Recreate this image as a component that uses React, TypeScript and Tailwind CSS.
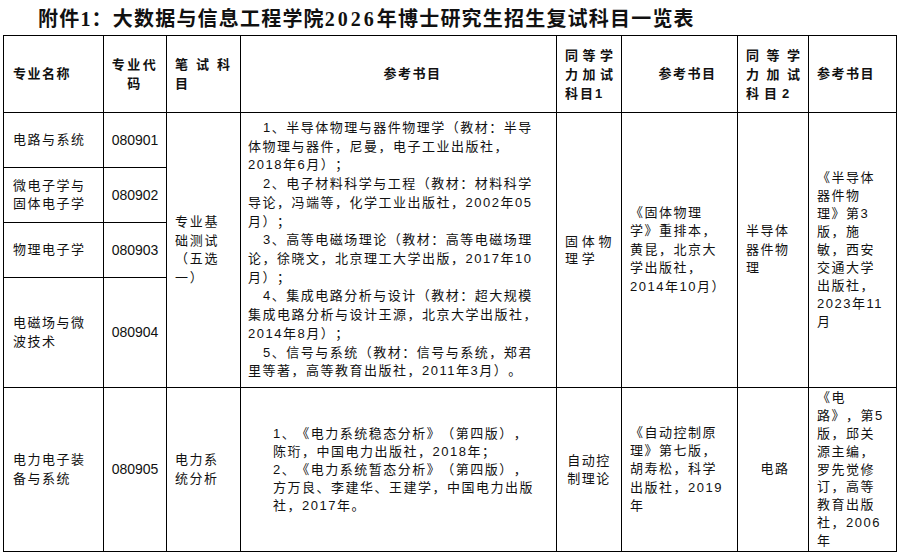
const sans = "font-['Liberation_Sans','Noto_Sans_CJK_SC',sans-serif]";

const Cell = ({ className = "", children }: { className?: string; children?: React.ReactNode }) => (
  <div className={`border-r border-b border-black flex items-center ${className}`}>{children}</div>
);

const Lines = ({ lines, className = "" }: { lines: string[]; className?: string }) => (
  <div className={className}>
    {lines.map((l, i) => (
      <div key={i} className="whitespace-nowrap">
        {l}
      </div>
    ))}
  </div>
);

const refsA: [string, boolean][] = [
  ["1、半导体物理与器件物理学（教材：半导", true],
  ["体物理与器件，尼曼，电子工业出版社，", false],
  ["2018年6月）；", false],
  ["2、电子材料科学与工程（教材：材料科学", true],
  ["导论，冯端等，化学工业出版社，2002年05", false],
  ["月）；", false],
  ["3、高等电磁场理论（教材：高等电磁场理", true],
  ["论，徐晓文，北京理工大学出版，2017年10", false],
  ["月）；", false],
  ["4、集成电路分析与设计（教材：超大规模", true],
  ["集成电路分析与设计王源，北京大学出版社，", false],
  ["2014年8月）；", false],
  ["5、信号与系统（教材：信号与系统，郑君", true],
  ["里等著，高等教育出版社，2011年3月）。", false],
];

const majors = [
  { name: ["电路与系统"], code: "080901" },
  { name: ["微电子学与", "固体电子学"], code: "080902" },
  { name: ["物理电子学"], code: "080903" },
  { name: ["电磁场与微", "波技术"], code: "080904" },
];

export default function App() {
  return (
    <div className={`w-[903px] h-[558px] bg-white text-[#111] ${sans} overflow-hidden [text-spacing-trim:space-all]`}>
      <div className="h-[35px] pt-[7px] pl-[38px] text-[20px] leading-[24px] font-bold tracking-[1.2px] whitespace-nowrap font-['Liberation_Serif','Noto_Sans_CJK_SC',serif]">
        附件1：大数据与信息工程学院<span className="tracking-[3px]">2026</span>年博士研究生招生复试科目一览表
      </div>

      <div className="ml-[3px] w-[894px] border-l border-t border-black grid grid-cols-[100px_63px_74px_316px_65px_116px_71px_88px] grid-rows-[77px_55px_55px_55px_110px_164px] text-[13px] leading-[18.5px] tracking-[1.5px]">
        {/* header */}
        <Cell className="pl-[9px] font-bold">专业名称</Cell>
        <Cell className="justify-center font-bold text-center">
          <Lines lines={["专业代", "码"]} className="tracking-[2.5px] leading-[19px]" />
        </Cell>
        <Cell className="pl-[8px] font-bold">
          <div className="leading-[19px]">
            <div className="tracking-[8px] whitespace-nowrap">笔试科</div>
            <div>目</div>
          </div>
        </Cell>
        <Cell className="justify-center pl-[28px] font-bold">参考书目</Cell>
        <Cell className="pl-[8px] font-bold">
          <div className="leading-[19px]">
            <div className="tracking-[4.5px] whitespace-nowrap">同等学</div>
            <div className="tracking-[4.5px] whitespace-nowrap">力加试</div>
            <div className="tracking-[2px] whitespace-nowrap">科目1</div>
          </div>
        </Cell>
        <Cell className="justify-center pl-[16px] font-bold">参考书目</Cell>
        <Cell className="pl-[8px] font-bold">
          <div className="leading-[19px]">
            <div className="tracking-[7.5px] whitespace-nowrap">同等学</div>
            <div className="tracking-[7.5px] whitespace-nowrap">力加试</div>
            <div className="tracking-[5px] whitespace-nowrap">科目2</div>
          </div>
        </Cell>
        <Cell className="pl-[8px] font-bold">参考书目</Cell>

        {/* first major + merged cells */}
        <Cell className="pl-[9px]">
          <Lines lines={majors[0].name} />
        </Cell>
        <Cell className="justify-center text-[14px] tracking-normal">{majors[0].code}</Cell>
        <Cell className="row-span-4 pl-[8px]">
          <Lines lines={["专业基", "础测试", "（五选", "一）"]} className="tracking-[1.8px]" />
        </Cell>
        <Cell className="row-span-4 pl-[7px]">
          <div className="leading-[18.7px]">
            {refsA.map(([t, indent], i) => (
              <div key={i} className={`whitespace-nowrap ${indent ? "pl-[15px]" : ""}`}>
                {t}
              </div>
            ))}
          </div>
        </Cell>
        <Cell className="row-span-4 pl-[8px]">
          <Lines lines={["固体物", "理学"]} className="tracking-[3.7px] leading-[17px]" />
        </Cell>
        <Cell className="row-span-4 pl-[8px]">
          <Lines lines={["《固体物理", "学》重排本，", "黄昆，北京大", "学出版社，", "2014年10月）"]} />
        </Cell>
        <Cell className="row-span-4 pl-[8px]">
          <Lines lines={["半导体", "器件物", "理"]} />
        </Cell>
        <Cell className="row-span-4 pl-[8px]">
          <Lines
            lines={["《半导体", "器件物", "理》第3", "版，施", "敏，西安", "交通大学", "出版社，", "2023年11", "月"]}
            className="leading-[18px]"
          />
        </Cell>

        {majors.slice(1).map((m) => [
          <Cell key={m.code + "n"} className="pl-[9px]">
            <Lines lines={m.name} />
          </Cell>,
          <Cell key={m.code} className="justify-center text-[14px] tracking-normal">
            {m.code}
          </Cell>,
        ])}

        {/* last row */}
        <Cell className="pl-[9px]">
          <Lines lines={["电力电子装", "备与系统"]} />
        </Cell>
        <Cell className="justify-center text-[14px] tracking-normal">080905</Cell>
        <Cell className="pl-[8px]">
          <Lines lines={["电力系", "统分析"]} />
        </Cell>
        <Cell className="pl-[32px]">
          <Lines
            lines={[
              "1、《电力系统稳态分析》（第四版），",
              "陈珩，中国电力出版社，2018年；",
              "2、《电力系统暂态分析》（第四版），",
              "方万良、李建华、王建学，中国电力出版",
              "社，2017年。",
            ]}
            className="leading-[18px]"
          />
        </Cell>
        <Cell className="justify-center text-center">
          <Lines lines={["自动控", "制理论"]} className="leading-[18px]" />
        </Cell>
        <Cell className="pl-[8px]">
          <Lines
            lines={["《自动控制原", "理》第七版，", "胡寿松，科学", "出版社，2019", "年"]}
            className="leading-[18.3px]"
          />
        </Cell>
        <Cell className="justify-center pl-[4px]">电路</Cell>
        <Cell className="pl-[8px]">
          <Lines
            lines={["《电", "路》，第5", "版，邱关", "源主编，", "罗先觉修", "订，高等", "教育出版", "社，2006", "年"]}
            className="leading-[17.8px]"
          />
        </Cell>
      </div>
    </div>
  );
}
